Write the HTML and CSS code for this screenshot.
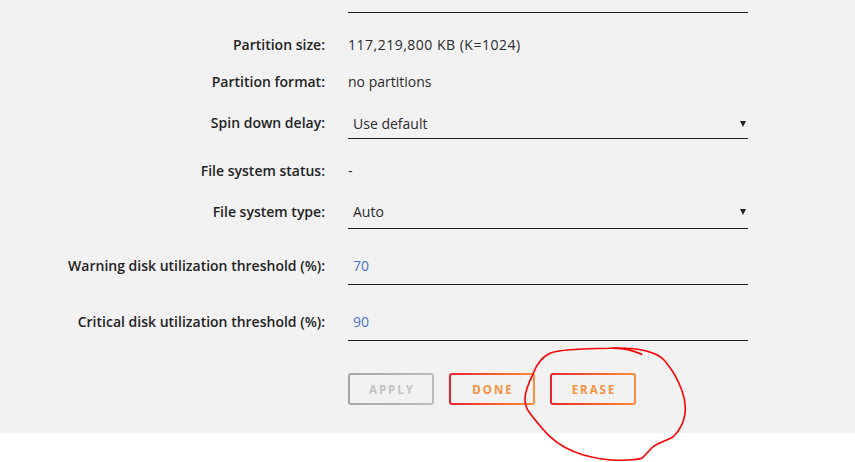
FILE: index.html
```html
<!DOCTYPE html>
<html>
<head>
<meta charset="utf-8">
<link rel="stylesheet" href="styles.css">
</head>
<body>
<div class="panel">
  <div class="prev-field"></div>
  <div class="row r1">
    <div class="label">Partition size:</div>
    <div class="value wide">117,219,800 KB (K=1024)</div>
  </div>
  <div class="row r2">
    <div class="label">Partition format:</div>
    <div class="value">no partitions</div>
  </div>
  <div class="row r3">
    <div class="label">Spin down delay:</div>
    <div class="select">
      <span>Use default</span>
      <span class="arrow"></span>
    </div>
  </div>
  <div class="row r4">
    <div class="label">File system status:</div>
    <div class="value">-</div>
  </div>
  <div class="row r5">
    <div class="label">File system type:</div>
    <div class="select tall">
      <span>Auto</span>
      <span class="arrow"></span>
    </div>
  </div>
  <div class="row r6">
    <div class="label">Warning disk utilization threshold (%):</div>
    <div class="input">70</div>
  </div>
  <div class="row r7">
    <div class="label">Critical disk utilization threshold (%):</div>
    <div class="input">90</div>
  </div>
  <div class="buttons">
    <button class="btn btn-disabled">APPLY</button>
    <button class="btn btn-primary">DONE</button>
    <button class="btn btn-primary">ERASE</button>
  </div>
</div>
<svg class="annotation" width="855" height="462" viewBox="0 0 855 462">
  <path d="M641.7 354.3 C632 350 620 347.5 610 348.3 C585 348.5 560 349 550 353.3 C540 358 536 366 533.3 373.3 C528 384 524.5 392 525 400 C525.5 406 527 410 530 413.3 C536 421 542 429 550 436.7 C560 446 570 451 583.3 455 C598 459 612 461 626.7 460 C634 459.8 638 459.5 641.7 458.3 C646 455 649 450 653.3 446.7 C660 442 668 440 673.3 436.7 C680 430 684 422 685 413.3 C686 405 684.5 397 681.7 390 C678 380 673 371 666.7 363.3 C663 358 658 355 653.3 353.3 C645 350 636 348.5 626.7 348.3 C620 348 614 348 610 348.3" />
</svg>
</body>
</html>
```

FILE: styles.css
```css
html, body {
  margin: 0;
  padding: 0;
  background: #ffffff;
}

body {
  font-family: "Open Sans", "Noto Sans", sans-serif;
  font-size: 14px;
  color: #2b2b2b;
  width: 855px;
  height: 462px;
  overflow: hidden;
}

.panel {
  background: #f2f2f2;
  height: 433px;
  box-sizing: border-box;
  display: flex;
  flex-direction: column;
}

.prev-field {
  margin-left: 348px;
  width: 400px;
  height: 12px;
  border-bottom: 1px solid #222222;
}

.row {
  display: flex;
  align-items: center;
  column-gap: 23px;
}

.label {
  width: 325px;
  flex: none;
  text-align: right;
  font-weight: 600;
  color: #232323;
  line-height: 20px;
}

.value {
  line-height: 20px;
  color: #2b2b2b;
}

.value.wide {
  letter-spacing: 0.5px;
}

.r1 { margin-top: 22px; height: 20px; }
.r2 { margin-top: 17px; height: 20px; }
.r3 { margin-top: 16px; }
.r4 { margin-top: 22px; height: 20px; }
.r5 { margin-top: 16px; }
.r6 { margin-top: 20px; }
.r7 { margin-top: 20px; }

.r3 .label { margin-bottom: 1px; }
.r5 .label { margin-bottom: 3px; }
.r6 .label, .r7 .label { margin-bottom: 3px; }

.select {
  width: 400px;
  box-sizing: border-box;
  height: 31px;
  border-bottom: 1px solid #222222;
  padding: 0 2px 0 5px;
  display: flex;
  align-items: center;
  justify-content: space-between;
  color: #2b2b2b;
}

.select.tall {
  height: 32px;
  padding-bottom: 2px;
}

.arrow {
  width: 0;
  height: 0;
  border-left: 3px solid transparent;
  border-right: 3px solid transparent;
  border-top: 6px solid #222222;
  margin-top: 1px;
}

.input {
  width: 400px;
  box-sizing: border-box;
  height: 36px;
  border-bottom: 1px solid #222222;
  padding: 0 5px 3px;
  display: flex;
  align-items: center;
  color: #4a72c6;
}

.buttons {
  display: flex;
  gap: 15px;
  margin-left: 348px;
  margin-top: 32px;
}

.btn {
  width: 86px;
  height: 32px;
  box-sizing: border-box;
  border: 2px solid transparent;
  border-radius: 3px;
  font-family: "Open Sans", "Noto Sans", sans-serif;
  font-weight: 700;
  font-size: 11.5px;
  letter-spacing: 2px;
  padding: 0 0 0 2px;
  cursor: pointer;
}

.btn-disabled {
  background:
    linear-gradient(#f2f2f2, #f2f2f2) padding-box,
    linear-gradient(to right, #a6a6a6, #bdbdbd) border-box;
  color: #c3c3c3;
}

.btn-primary {
  background:
    linear-gradient(#f2f2f2, #f2f2f2) padding-box,
    linear-gradient(to right, #e8242b, #ff8f3b) border-box;
  color: #f7913f;
}

.annotation {
  position: absolute;
  left: 0;
  top: 0;
  pointer-events: none;
}

.annotation path {
  fill: none;
  stroke: #ff0000;
  stroke-width: 1.6;
  stroke-linecap: round;
  stroke-linejoin: round;
}
```
